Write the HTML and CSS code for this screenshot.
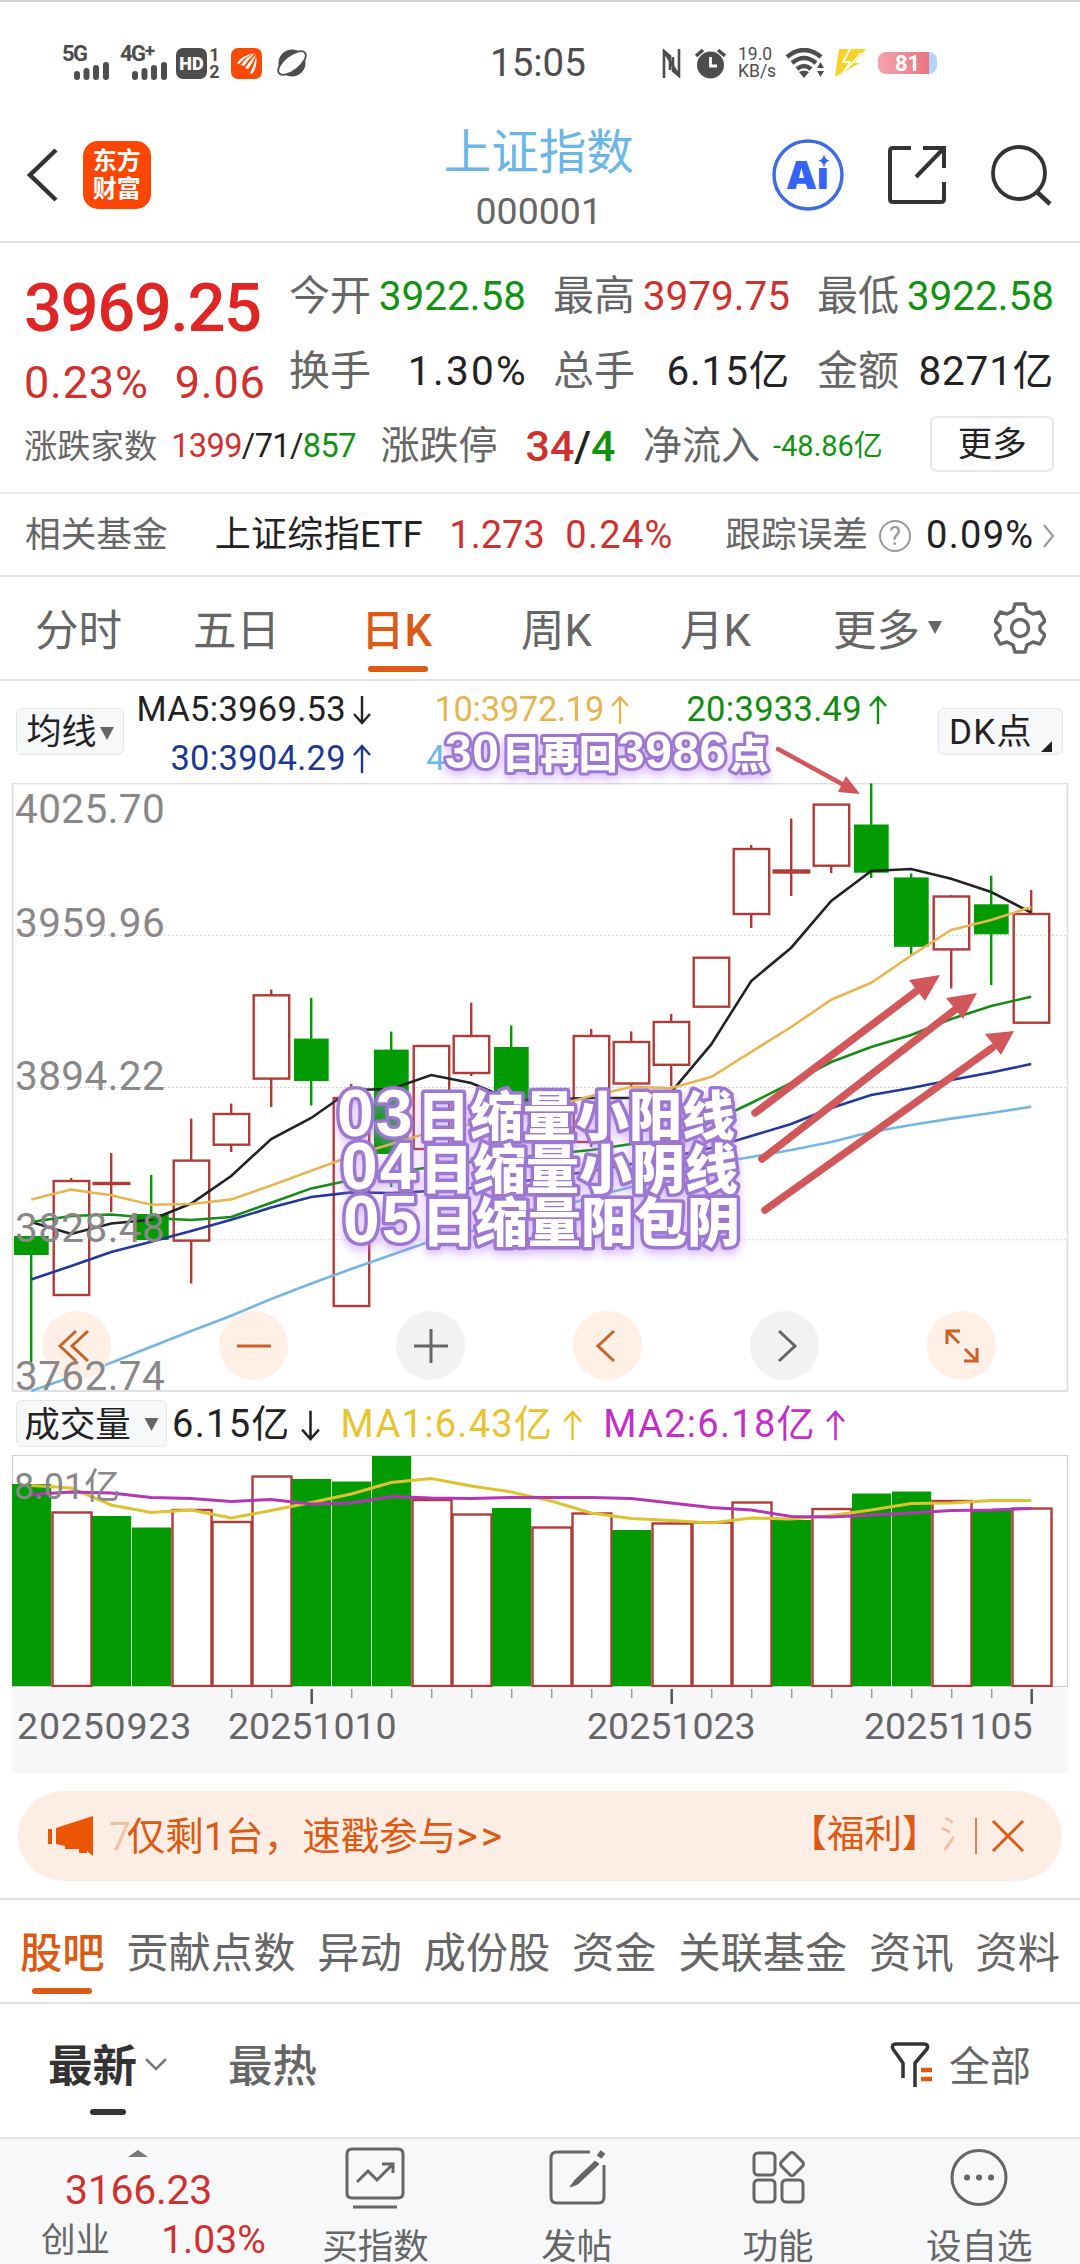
FILE: index.html
```html
<!DOCTYPE html>
<html lang="zh-CN">
<head>
    <meta charset="UTF-8">
    <meta name="viewport" content="width=device-width, initial-scale=1.0">
    <title>上证指数 000001</title>
    <link rel="stylesheet" href="styles.css">
</head>
<body>
    <svg class="defs" width="0" height="0">
        <symbol id="up" viewBox="0 0 20 30"><path d="M10 29V3M2 11L10 2L18 11" fill="none" stroke="currentColor" stroke-width="2.4"/></symbol>
        <symbol id="down" viewBox="0 0 20 30"><path d="M10 1V27M2 19L10 28L18 19" fill="none" stroke="currentColor" stroke-width="2.4"/></symbol>
        <symbol id="bars" viewBox="0 0 36 18"><path d="M3 12V15M12.500 9V15M22 6V15M32 3V15" fill="none" stroke="currentColor" stroke-width="6" stroke-linecap="round"/></symbol>
    </svg>

    <div class="status">
        <div class="signal"><b>5G</b><svg width="36" height="18"><use href="#bars"/></svg></div>
        <div class="signal second"><b>4G<sup>+</sup></b><svg width="36" height="18"><use href="#bars"/></svg></div>
        <div class="hd">HD</div>
        <div class="sims"><span>1</span><span>2</span></div>
        <svg class="app-dot" width="31" height="31" viewBox="0 0 31 31"><rect width="31" height="31" rx="7" fill="#fa4a06"/><path d="M6 15Q12 7 23 5Q14 9 8 16ZM10 17Q15 9 24 5Q17 12 13 18ZM14 20Q19 13 25 6Q22 15 17 21ZM19 25Q23 18 25 9Q27 18 21 26Z" fill="#fff"/></svg>
        <svg class="planet" width="30" height="30" viewBox="0 0 30 30"><circle cx="15" cy="15" r="13.500" fill="#4d4d4d"/><ellipse cx="15" cy="15" rx="16.500" ry="7.500" transform="rotate(-38 15 15)" fill="#fff" stroke="#4d4d4d" stroke-width="1.800"/></svg>
        <div class="clock">15:05</div>
        <svg class="nfc" width="19" height="31" viewBox="0 0 19 31"><path d="M2 30V3L8 8V22M17 1V28L11 23V9M2 3L17 28" fill="none" stroke="#4d4d4d" stroke-width="2.600"/></svg>
        <svg class="alarm" width="31" height="31" viewBox="0 0 31 31"><circle cx="15.500" cy="17" r="13.500" fill="#4d4d4d"/><path d="M1 8L8 2M30 8L23 2" stroke="#4d4d4d" stroke-width="3.500"/><path d="M15.500 9V18H22" fill="none" stroke="#fff" stroke-width="2.800"/></svg>
        <div class="speed"><span>19.0</span><span>KB/s</span></div>
        <svg class="wifi" width="39" height="30" viewBox="0 0 39 30"><path d="M1 9Q18 -5 35 9M6 15Q18 5 30 15M11 21Q18 15 25 21" fill="none" stroke="#4d4d4d" stroke-width="4.500"/><path d="M13 24Q18 21 23 24L18 30ZM31 20L34.500 14L38 20ZM31 23L34.500 29L38 23Z" fill="#4d4d4d"/></svg>
        <svg class="bolt" width="33" height="28" viewBox="0 0 33 28"><path d="M5 0H32L20 14H26L1 28Z" fill="#f7d32a"/><path d="M16 0L9 13H16L7 27M27 4L13 20" stroke="#fff" stroke-width="1.600" fill="none"/></svg>
        <div class="battery">81</div>
    </div>

    <header class="nav">
        <svg class="back" width="31" height="54" viewBox="0 0 31 54"><path d="M29 2L3 27L29 52" fill="none" stroke="#333" stroke-width="4.500"/></svg>
        <div class="logo">东方<br>财富</div>
        <div class="title">
            <h1>上证指数</h1>
            <p>000001</p>
        </div>
        <svg class="ai" width="72" height="72" viewBox="0 0 72 72"><circle cx="36" cy="36" r="34" fill="none" stroke="#426be0" stroke-width="3.500"/><text x="14" y="50" class="ai-text">Aı</text><path d="M52 15Q53 21 58 21.500Q53 22 52 29Q51 22 46 21.500Q51 21 52 15Z" fill="#3563f5"/></svg>
        <svg class="share" width="60" height="60" viewBox="0 0 60 60"><path d="M24 3H6Q3 3 3 6V54Q3 57 6 57H54Q57 57 57 54V37M36 3H57V23M57 3L29 32" fill="none" stroke="#333" stroke-width="4"/></svg>
        <svg class="search" width="62" height="62" viewBox="0 0 62 62"><circle cx="29" cy="29" r="26" fill="none" stroke="#333" stroke-width="3.800"/><path d="M47 48L60 60" stroke="#333" stroke-width="4.500"/></svg>
    </header>

    <section class="quote">
        <div class="price">
            <div class="last">3969.25</div>
            <div class="change"><span>0.23%</span><span>9.06</span></div>
        </div>
        <dl class="stats">
            <div><dt>今开</dt><dd class="green">3922.58</dd></div>
            <div><dt>最高</dt><dd class="red">3979.75</dd></div>
            <div><dt>最低</dt><dd class="green">3922.58</dd></div>
            <div><dt>换手</dt><dd class="rate">1.30%</dd></div>
            <div><dt>总手</dt><dd class="wide">6.15亿</dd></div>
            <div><dt>金额</dt><dd class="wide">8271亿</dd></div>
        </dl>
        <div class="breadth">
            <span class="lbl small">涨跌家数</span>
            <span class="updown"><i class="red">1399</i>/71/<i class="green">857</i></span>
            <span class="lbl">涨跌停</span>
            <span class="limit"><i class="red">34</i>/<i class="green">4</i></span>
            <span class="lbl">净流入</span>
            <span class="flow green">-48.86亿</span>
            <button class="more">更多</button>
        </div>
    </section>

    <section class="fund">
        <span class="gray">相关基金</span>
        <span class="etf">上证综指ETF</span>
        <span class="num red">1.273</span>
        <span class="num red pct">0.24%</span>
        <span class="gray err">跟踪误差</span>
        <span class="help">?</span>
        <span class="num error-rate">0.09%</span>
        <svg width="12" height="24" viewBox="0 0 12 24"><path d="M1 1L10 12L1 23" fill="none" stroke="#999" stroke-width="2"/></svg>
    </section>

    <nav class="periods">
        <a>分时</a>
        <a>五日</a>
        <a class="active">日K</a>
        <a>周K</a>
        <a>月K</a>
        <a>更多<svg width="14" height="13" viewBox="0 0 14 13"><path d="M0 0H14L7 13Z" fill="#666"/></svg></a>
        <svg class="gear" width="52" height="52" viewBox="0 0 52 52"><path d="M21 2H31L33 9L39 12L46 10L51 19L46 24V28L51 33L46 42L39 40L33 43L31 50H21L19 43L13 40L6 42L1 33L6 28V24L1 19L6 10L13 12L19 9Z" fill="none" stroke="#666" stroke-width="3.400" stroke-linejoin="round"/><circle cx="26" cy="26" r="8.500" fill="none" stroke="#666" stroke-width="3.400"/></svg>
    </nav>

    <section class="kline">
        <div class="ma-bar">
            <button class="pill">均线<svg width="14" height="13" viewBox="0 0 14 13"><path d="M0 0H14L7 13Z" fill="#666"/></svg></button>
            <div class="ma-list">
                <span class="ma5">MA5:3969.53<svg><use href="#down"/></svg></span>
                <span class="ma10">10:3972.19<svg><use href="#up"/></svg></span>
                <span class="ma20">20:3933.49<svg><use href="#up"/></svg></span>
                <span class="ma30">30:3904.29<svg><use href="#up"/></svg></span>
                <span class="ma60">4</span>
            </div>
            <button class="pill dk">DK点<svg width="11" height="11" viewBox="0 0 11 11"><path d="M11 0V11H0Z" fill="#222"/></svg></button>
        </div>
        <div class="price-chart">
            <svg id="candles" width="1080" height="609" viewBox="0 783 1080 609"></svg>
            <div class="tools">
                <button class="warm"><svg viewBox="0 0 34 34"><path d="M19 2L3 17L19 32M31 2L15 17L31 32"/></svg></button>
                <button class="warm"><svg viewBox="0 0 34 34"><path d="M0 17H34"/></svg></button>
                <button><svg viewBox="0 0 34 34"><path d="M0 17H34M17 0V34"/></svg></button>
                <button class="warm"><svg viewBox="0 0 34 34"><path d="M23 2L7 17L23 32"/></svg></button>
                <button><svg viewBox="0 0 34 34"><path d="M11 2L27 17L11 32"/></svg></button>
                <button class="warm"><svg viewBox="0 0 34 34"><path d="M2 15V2H15M2 2L14 14M32 19V32H19M32 32L20 20"/></svg></button>
            </div>
            <div class="scale">
                <span>4025.70</span>
                <span>3959.96</span>
                <span>3894.22</span>
                <span>3828.48</span>
                <span>3762.74</span>
            </div>
        </div>
        <svg class="marks" width="1080" height="711" viewBox="0 681 1080 711">
            <g stroke="#d2575b" stroke-width="7.500" stroke-linecap="round">
                <path d="M778 749L842 784" stroke-width="4.500"/>
                <path d="M755 1113L918 990"/>
                <path d="M762 1159L956 1009"/>
                <path d="M765 1210L992 1048"/>
            </g>
            <g fill="#d2575b">
                <path d="M860 794L838 792L846 776Z"/>
                <path d="M940 975L925 1001L909 980Z"/>
                <path d="M977 993L963 1019L946 998Z"/>
                <path d="M1014 1031L1001 1055L985 1034Z"/>
            </g>
            <g class="note small-note">
                <text y="768"><tspan class="digits" x="445">30</tspan><tspan x="502">日再回</tspan><tspan class="digits" x="618">3986</tspan><tspan x="730">点</tspan></text>
            </g>
            <g class="note">
                <text y="1136"><tspan class="digits" x="337">03</tspan><tspan x="417">日缩量小阳线</tspan></text>
                <text y="1189"><tspan class="digits" x="341">04</tspan><tspan x="420">日缩量小阴线</tspan></text>
                <text y="1242"><tspan class="digits" x="343">05</tspan><tspan x="422">日缩量阳包阴</tspan></text>
            </g>
        </svg>
    </section>

    <section class="volume">
        <div class="vol-bar">
            <button class="pill">成交量<svg width="15" height="13" viewBox="0 0 14 13"><path d="M0 0H14L7 13Z" fill="#666"/></svg></button>
            <span class="vol">6.15亿<svg><use href="#down"/></svg></span>
            <span class="v1">MA1:6.43亿<svg><use href="#up"/></svg></span>
            <span class="v2">MA2:6.18亿<svg><use href="#up"/></svg></span>
        </div>
        <div class="vol-chart">
            <svg id="bars-chart" width="1080" height="232" viewBox="0 1455 1080 232"></svg>
            <span class="vol-max">8.01亿</span>
        </div>
        <div class="axis">
            <svg id="ticks" width="1056" height="16" viewBox="12 1689 1056 16"></svg>
            <div class="dates"><span>20250923</span><span>20251010</span><span>20251023</span><span>20251105</span></div>
        </div>
    </section>

    <div class="banner">
        <svg width="46" height="40" viewBox="0 0 46 40"><path d="M0 13H4V28H0ZM8 12L45 0V40L39 35V37H31V33H17V30L8 28Z" fill="#ec5504"/></svg>
        <div class="marquee"><span><i class="fade-in">7</i>仅剩1台，速戳参与<i class="go">&gt;&gt;</i></span><span class="promo">【福利】<i class="fade-out">氵</i></span></div>
        <svg class="close" width="49" height="36" viewBox="0 0 49 36"><path d="M1 0V36" stroke="#dc5a14" stroke-width="1.500"/><path d="M18 3L48 33M48 3L18 33" stroke="#dc5a14" stroke-width="3"/></svg>
    </div>

    <nav class="tabs">
        <a class="active">股吧</a><a>贡献点数</a><a>异动</a><a>成份股</a><a>资金</a><a>关联基金</a><a>资讯</a><a>资料</a>
    </nav>

    <div class="feed">
        <a class="active">最新</a>
        <svg class="caret" width="22" height="13" viewBox="0 0 22 13"><path d="M1 1L11 11L21 1" fill="none" stroke="#777" stroke-width="2.500"/></svg>
        <a>最热</a>
        <svg class="filter" width="43" height="46" viewBox="0 0 43 46"><path d="M13 36V21L3 7Q1 2 6 2H34Q39 2 37 7L25 21V45" fill="none" stroke="#333" stroke-width="3.500"/><path d="M31 28H42M31 37H42" stroke="#dc5a14" stroke-width="4.500"/></svg>
        <span>全部</span>
    </div>

    <footer class="bottom">
        <div class="index">
            <svg width="20" height="7" viewBox="0 0 20 7"><path d="M0 7L10 0L20 7Z" fill="#777"/></svg>
            <div class="value">3166.23</div>
            <div class="row"><span>创业</span><span class="up">1.03%</span></div>
        </div>
        <div class="item">
            <svg viewBox="0 0 64 62"><path d="M9 2H55Q60 2 60 7V46Q60 51 55 51H9Q4 51 4 46V7Q4 2 9 2ZM10 60H54M14 35L25 24L34 33L50 17M39 17H50V26"/></svg>
            <span>买指数</span>
        </div>
        <div class="item">
            <svg viewBox="0 0 64 62"><path d="M45 5H12Q6 5 6 11V50Q6 56 12 56H53Q59 56 59 50V18"/><path d="M54 10L58 5" stroke-width="6"/><path d="M50 14L30 33L25 40L33 37L54 17Z" fill="#666" stroke-width="1"/></svg>
            <span>发帖</span>
        </div>
        <div class="item">
            <svg viewBox="0 0 64 62"><rect x="8" y="6" width="21" height="22" rx="4"/><rect x="8" y="33" width="21" height="22" rx="4"/><rect x="36" y="33" width="21" height="22" rx="4"/><rect x="37" y="8" width="18" height="18" rx="3" transform="rotate(45 46 17)"/></svg>
            <span>功能</span>
        </div>
        <div class="item">
            <svg viewBox="0 0 64 62"><circle cx="32" cy="30.500" r="27"/><path d="M20 30.500H20.100M32 30.500H32.100M44 30.500H44.100" stroke-width="6" stroke-linecap="round"/></svg>
            <span>设自选</span>
        </div>
    </footer>

    <script src="script.js"></script>
</body>
</html>
```

FILE: styles.css
```css
* {
    box-sizing: border-box;
}
body {
    width: 1080px;
    height: 2264px;
    margin: 0;
    overflow: hidden;
    background-color: #fff;
    color: #222;
    font-family: Roboto, "Noto Sans CJK SC", sans-serif;
    line-height: 1.2;
    white-space: nowrap;
}
h1, p, dl, dd {
    margin: 0;
}
i {
    font-style: normal;
}
button {
    font-family: inherit;
    color: inherit;
    padding: 0;
}
svg {
    display: block;
    flex: none;
}
.defs {
    position: absolute;
}
.red {
    color: #d0312f;
}
.green {
    color: #109410;
}

/* status bar */
.status {
    display: flex;
    align-items: center;
    height: 112px;
    padding: 12px 0 0 62px;
    border-top: 2px solid #d0d0d0;
    color: #4d4d4d;
}
.signal {
    width: 48px;
    height: 34px;
}
.signal b {
    display: block;
    font-size: 22px;
    line-height: 15px;
    letter-spacing: -1.5px;
}
.signal sup {
    font-size: 19px;
    line-height: 0;
    vertical-align: 4px;
}
.signal svg {
    margin: 1px 0 0 12px;
}
.second {
    margin-left: 10px;
}
.hd {
    width: 31px;
    height: 31px;
    margin-left: 8px;
    border-radius: 7px;
    background-color: #4d4d4d;
    color: #fff;
    font-size: 18px;
    font-weight: 900;
    line-height: 31px;
    text-align: center;
}
.sims {
    display: flex;
    flex-direction: column;
    width: 15px;
    font-size: 18px;
    font-weight: bold;
    line-height: 17px;
    text-align: center;
}
.app-dot {
    margin-left: 9px;
}
.planet {
    margin-left: 15px;
    overflow: visible;
}
.clock {
    margin-left: 183px;
    width: 98px;
    font-size: 38.5px;
}
.nfc {
    margin-left: 74px;
}
.alarm {
    margin-left: 14px;
}
.speed {
    display: flex;
    flex-direction: column;
    width: 36px;
    margin-left: 12px;
    font-size: 17.5px;
    line-height: 17px;
}
.wifi {
    margin-left: 12px;
}
.bolt {
    margin-left: 9px;
}
.battery {
    width: 59px;
    height: 22px;
    margin-left: 11px;
    border-radius: 8px;
    background: linear-gradient(90deg, #f3a3ae, #ea7582 86%, #b4d4f7 86%);
    color: #fff;
    font-size: 22px;
    font-weight: bold;
    line-height: 23px;
    text-align: center;
}

/* title bar */
.nav {
    display: flex;
    align-items: center;
    height: 131px;
    padding: 0 28px 4px 27px;
    border-bottom: 2px solid #e2e2e2;
}
.logo {
    width: 68px;
    height: 68px;
    margin-left: 25px;
    padding-top: 6px;
    border-radius: 15px;
    background-color: #fb4703;
    color: #fff;
    font-size: 24px;
    font-weight: bold;
    line-height: 28px;
    text-align: center;
}
.title {
    width: 200px;
    margin-left: 289px;
    padding-top: 11px;
    text-align: center;
}
.title h1 {
    color: #6ab6e6;
    font-size: 47.5px;
    font-weight: 400;
    line-height: 58px;
}
.title p {
    color: #666;
    font-size: 37.5px;
    line-height: 50px;
    padding-top: 4px;
}
.ai {
    margin-left: 134px;
}
.ai-text {
    fill: #3563f5;
    font-family: Inter, sans-serif;
    font-size: 39px;
    font-weight: 900;
}
.share {
    margin-left: 43px;
}
.search {
    margin-left: 43px;
}

/* quote */
.quote {
    display: grid;
    grid-template-columns: 265px 1fr;
    height: 251px;
    padding: 16px 26px 0 24px;
    border-bottom: 2px solid #ededed;
}
.last {
    height: 96px;
    color: #e02525;
    font-size: 67px;
    font-weight: 500;
    line-height: 98px;
    letter-spacing: -1.5px;
}
.change {
    display: flex;
    gap: 26px;
    color: #d0312f;
    font-size: 45px;
    line-height: 56px;
    letter-spacing: 0.8px;
}
.stats {
    display: grid;
    grid-template-columns: repeat(3, 237px);
    grid-auto-rows: 75px;
    column-gap: 27px;
}
.stats div {
    display: flex;
    justify-content: space-between;
    align-items: center;
}
.stats dt {
    color: #666;
    font-size: 41px;
}
.stats dd {
    font-size: 40.5px;
}
.stats .rate {
    letter-spacing: 2.3px;
    margin-right: -2px;
}
.stats .wide {
    letter-spacing: 0.8px;
}
.breadth {
    grid-column: 1 / 3;
    display: flex;
    align-items: center;
    height: 72px;
    margin-top: -10px;
}
.lbl {
    color: #666;
    font-size: 39px;
}
.small {
    font-size: 33.3px;
}
.updown {
    width: 210px;
    margin-left: 14px;
    font-size: 32.5px;
    letter-spacing: -0.6px;
}
.limit {
    width: 118px;
    margin-left: 28px;
    font-size: 43px;
    font-weight: 500;
}
.flow {
    width: 158px;
    margin-left: 13px;
    font-size: 29px;
}
.more {
    width: 124px;
    height: 56px;
    margin-top: -6px;
    border: 2px solid #e3e6e6;
    border-radius: 7px;
    background-color: #fff;
    font-size: 34.5px;
    line-height: 44px;
}

/* related fund */
.fund {
    display: flex;
    align-items: center;
    height: 83px;
    padding: 2px 25px 0;
    border-bottom: 2px solid #e2e2e2;
    font-size: 35.7px;
}
.gray {
    color: #666;
}
.etf {
    width: 211px;
    margin-left: 47px;
    font-size: 36px;
    letter-spacing: 0.3px;
}
.num {
    width: 92px;
    margin-left: 24px;
    font-size: 38px;
}
.fund .pct {
    width: 108px;
    letter-spacing: 1.3px;
}
.err {
    margin-left: 52px;
}
.help {
    width: 32px;
    height: 32px;
    margin-left: 11px;
    border: 2px solid #999;
    border-radius: 50%;
    color: #999;
    font-size: 25px;
    line-height: 29px;
    text-align: center;
}
.fund .error-rate {
    width: 108px;
    margin: 0 9px 0 15px;
    letter-spacing: 1.3px;
}

/* period tabs */
.periods {
    display: grid;
    grid-template-columns: 158px 161px 159px 159px 159px 163px 52px;
    align-items: center;
    height: 104px;
    padding-left: 35px;
    border-bottom: 2px solid #e2e2e2;
    color: #666;
    font-size: 43.5px;
}
.periods a {
    display: flex;
    align-items: center;
    height: 102px;
    padding-top: 8px;
}
.periods a:nth-child(3) {
    padding-left: 7px;
}
.periods a:nth-child(4), .periods a:nth-child(5) {
    padding-left: 8px;
}
.periods a:nth-child(6) {
    padding-left: 2px;
}
.periods a svg {
    margin-left: 8px;
    margin-bottom: 10px;
}
.periods .active {
    position: relative;
    color: #dc5a14;
    font-weight: 500;
}
.periods .active::after {
    content: "";
    position: absolute;
    left: 14px;
    bottom: 7px;
    width: 60px;
    height: 6px;
    border-radius: 3px;
    background-color: #dc5a14;
}

/* k-line */
.kline {
    position: relative;
}
.ma-bar {
    display: flex;
    height: 102px;
    padding-left: 16px;
}
.pill {
    display: flex;
    justify-content: center;
    align-items: center;
    width: 108px;
    height: 47px;
    margin-top: 27px;
    padding-top: 3px;
    border: 1px solid #e3e6e8;
    border-radius: 6px;
    background-color: #f7f8fa;
    font-size: 35px;
    line-height: 44px;
}
.pill svg {
    margin-left: 3px;
}
.ma-list {
    display: grid;
    grid-template-columns: 248px 258px 258px;
    grid-auto-rows: 49px;
    font-size: 34.5px;
}
.ma-list span {
    display: flex;
    justify-content: flex-end;
    align-items: center;
    padding-top: 8px;
}
.ma-list svg {
    width: 20px;
    height: 30px;
    margin-left: 6px;
}
.ma-list .ma5, .ma-list .ma20 {
    letter-spacing: 0.3px;
}
.ma-list .ma60 {
    justify-content: flex-start;
    padding-left: 54px;
}
.ma10 {
    color: #e6b552;
    letter-spacing: -0.3px;
}
.ma20 {
    color: #108c10;
}
.ma30 {
    color: #1f3794;
    letter-spacing: 0.3px;
}
.ma60 {
    color: #6fb9e6;
}
.pill.dk {
    width: 125px;
    margin-left: 50px;
    letter-spacing: 1.3px;
}
.dk svg {
    margin: 26px 0 0 8px;
}
.price-chart {
    position: relative;
    height: 608px;
}
.scale span {
    position: absolute;
    left: 15px;
    color: #888;
    font-size: 40.5px;
    line-height: 46px;
    letter-spacing: 0.4px;
}
.scale span:nth-child(1) { top: 3px; }
.scale span:nth-child(2) { top: 117px; }
.scale span:nth-child(3) { top: 270px; }
.scale span:nth-child(4) { top: 422px; }
.scale span:nth-child(5) { top: 570px; }
.tools {
    position: absolute;
    left: 42px;
    bottom: 11px;
    display: flex;
    gap: 108px;
}
.tools button {
    display: flex;
    justify-content: center;
    align-items: center;
    width: 69px;
    height: 69px;
    border: none;
    border-radius: 50%;
    background-color: #f2f2f2;
    color: #666;
}
.tools .warm {
    background-color: #feefe7;
    color: #c96227;
}
.tools svg {
    width: 34px;
    height: 34px;
    fill: none;
    stroke: currentColor;
    stroke-width: 3;
}
.tools button:first-child {
    padding-right: 6px;
}
/* arrows and outlined captions over the chart */
.marks {
    position: absolute;
    left: 0;
    top: 0;
}
.note {
    fill: #fff;
    stroke: #9c78d2;
    stroke-width: 7px;
    stroke-linejoin: round;
    paint-order: stroke;
    font-family: "Noto Sans CJK SC", sans-serif;
    font-size: 53px;
    font-weight: 900;
    filter: drop-shadow(0 5px 5px rgba(184, 130, 255, 0.5));
}
.note .digits {
    font-family: "Liberation Sans", Arial, sans-serif;
    font-size: 66px;
    font-weight: bold;
    letter-spacing: 2px;
}
.small-note {
    font-size: 38.5px;
    stroke-width: 6px;
}
.small-note .digits {
    font-size: 48px;
    letter-spacing: 0.5px;
}

/* volume */
.vol-bar {
    display: flex;
    align-items: center;
    height: 64px;
    padding-left: 16px;
    font-size: 38px;
    letter-spacing: 1.3px;
}
.vol-bar .pill {
    width: 151px;
    margin-top: 0;
    font-size: 35.5px;
}
.vol-bar .pill svg {
    margin-left: 13px;
}
.vol-bar span {
    display: flex;
    align-items: center;
    margin-left: 5px;
    padding-top: 4px;
}
.vol-bar span svg {
    width: 21px;
    height: 33px;
    margin-left: 9px;
}
.vol-bar .v1 {
    margin-left: 20px;
    color: #e8c52e;
}
.vol-bar .v2 {
    margin-left: 20px;
    color: #c42fc9;
}
.vol-chart {
    position: relative;
    height: 232px;
}
.vol-max {
    position: absolute;
    left: 14px;
    top: 8px;
    color: #888;
    font-size: 36px;
    line-height: 48px;
}
.axis {
    height: 86px;
    margin: 0 12px;
    padding-top: 2px;
    background-color: #f7f7fa;
}
.dates {
    display: grid;
    grid-template-columns: 211px 359px 277px 1fr;
    padding-left: 5px;
    color: #666;
    font-size: 37.5px;
    line-height: 43px;
}
.dates span:first-child {
    letter-spacing: 0.8px;
}

/* marquee banner */
.banner {
    display: flex;
    align-items: center;
    height: 90px;
    margin: 18px 18px 17px;
    padding-left: 30px;
    border-radius: 45px;
    background-color: #fceee5;
    color: #dc5a14;
    font-size: 38.5px;
}
.marquee {
    display: flex;
    justify-content: space-between;
    width: 842px;
    margin-left: 15px;
    padding-top: 2px;
}
.promo {
    margin-right: -26px;
    font-size: 37.5px;
}
.fade-in {
    opacity: 0.3;
    margin-right: -4px;
}
.fade-out {
    opacity: 0.3;
}
.go {
    font-size: 41px;
    letter-spacing: 3px;
}
.close {
    margin-left: 24px;
}

/* content tabs */
.tabs {
    display: flex;
    justify-content: space-between;
    height: 106px;
    padding: 0 20px 0 20px;
    border-top: 2px solid #e2e2e2;
    border-bottom: 2px solid #e2e2e2;
    color: #666;
    font-size: 42.3px;
    line-height: 107px;
}
.tabs .active {
    position: relative;
    color: #dc5a14;
    font-weight: 500;
}
.tabs .active::after {
    content: "";
    position: absolute;
    left: 12px;
    bottom: 8px;
    width: 60px;
    height: 6px;
    border-radius: 3px;
    background-color: #dc5a14;
}

.feed {
    display: flex;
    align-items: center;
    height: 135px;
    padding: 0 49px 6px 48px;
    border-bottom: 2px solid #e2e2e2;
    color: #666;
    font-size: 44.5px;
    font-weight: 500;
}
.feed .active {
    position: relative;
    color: #333;
    font-weight: bold;
}
.feed .active::after {
    content: "";
    position: absolute;
    left: 42px;
    bottom: -21px;
    width: 36px;
    height: 6px;
    border-radius: 3px;
    background-color: #333;
}
.caret {
    margin: -6px 61px 0 8px;
}
.filter {
    margin: -5px 16px 0 auto;
}
.feed span {
    font-size: 41px;
    font-weight: 400;
}

/* bottom toolbar */
.bottom {
    display: flex;
    height: 126px;
    background-color: #f7f8fa;
    color: #666;
    font-size: 35.5px;
}
.index {
    width: 275px;
    padding-top: 11px;
}
.index svg {
    margin-left: 128px;
}
.value {
    margin: 7px 0 0 65px;
    color: #d0312f;
    font-size: 41px;
    line-height: 52px;
    letter-spacing: -0.3px;
}
.row {
    display: flex;
    justify-content: space-between;
    padding: 0 9px 0 41px;
    font-size: 34.5px;
    line-height: 48px;
}
.up {
    color: #d0312f;
    font-size: 39px;
}
.item {
    display: flex;
    flex-direction: column;
    align-items: center;
    width: 201.500px;
    padding-top: 8px;
}
.item svg {
    width: 64px;
    height: 62px;
    fill: none;
    stroke: #666;
    stroke-width: 3;
}
.item span {
    padding-top: 14px;
    line-height: 48px;
}
```

FILE: script.js
```js
const RED = '#b23a37';
const GREEN = '#029c02';
const STEP = 40;
const FIRST = 31.2;

const cx = i => FIRST + i * STEP;

// [color, body top, body bottom, high, low]
const candles = [
    ['g', 1236, 1255, 1236, 1362], ['r', 1181, 1295, 1178, 1295], ['r', 1183, 1184, 1153, 1212],
    ['g', 1214, 1240, 1175, 1240], ['r', 1160.6, 1240.6, 1118.6, 1283.5], ['r', 1114, 1144.7, 1103.5, 1152],
    ['r', 995.3, 1078.6, 989.6, 1107], ['g', 1038.6, 1081, 998, 1105.5], ['r', 1098, 1306, 1084, 1306],
    ['g', 1049.6, 1154, 1031.6, 1187], ['r', 1046, 1149, 1046, 1149], ['r', 1036, 1073, 1002.7, 1076],
    ['g', 1047, 1106, 1025.5, 1106], ['g', 1106, 1150, 1100, 1172], ['r', 1036, 1142, 1029, 1147],
    ['r', 1042, 1083.5, 1031.4, 1086], ['r', 1022, 1064.8, 1014, 1086], ['r', 957.7, 1006.7, 957.7, 1006.7],
    ['r', 849, 914, 845, 928], ['r', 870.5, 872.5, 818.5, 896], ['r', 804.6, 865.7, 804.6, 873],
    ['g', 824.5, 872.7, 783.3, 878], ['g', 877.4, 946.8, 873.5, 954.6], ['r', 896.5, 949.4, 895, 988.5],
    ['g', 904.3, 934.3, 875.7, 985], ['r', 914, 1022.7, 890, 1022.7]
];

const averages = {
    '#222222': [1222, 1234, 1223.5, 1219.8, 1203.5, 1176, 1139, 1118, 1090, 1089, 1075, 1083, 1100, 1099, 1098, 1098, 1092, 1044.4, 981, 947.7, 901, 871, 869, 878.7, 892, 912.6],
    '#e8b552': [1199.4, 1189.6, 1195.3, 1204.7, 1204, 1199.4, 1185.5, 1170.8, 1156, 1144, 1132, 1124, 1116, 1107, 1096, 1087, 1088, 1077, 1051.8, 1027, 999.7, 982.8, 955.5, 930, 920, 907],
    '#168c16': [1222, 1216, 1214.5, 1218, 1220, 1217, 1202.7, 1188.4, 1180, 1173, 1167, 1162, 1158, 1154, 1150, 1144, 1140, 1122, 1103, 1083, 1062, 1047, 1035, 1019, 1006, 996.7],
    '#22389a': [1279.4, 1266, 1252, 1241.8, 1231, 1219.8, 1207.6, 1197, 1192.4, 1193, 1191, 1188, 1183, 1177, 1171, 1164, 1157, 1148, 1136, 1124, 1108, 1095, 1088, 1080, 1072.6, 1064],
    '#75b6e2': [1391, 1377, 1362.7, 1346.7, 1331, 1315.7, 1299, 1283.5, 1269, 1255, 1241, 1231, 1221, 1210, 1197, 1187, 1173, 1163.7, 1157, 1150, 1142, 1132, 1125, 1118.6, 1113, 1106.8]
};

// [color, bar top]
const volumes = [
    ['g', 1484], ['r', 1512.5], ['g', 1516], ['g', 1527.5], ['r', 1510], ['r', 1522], ['r', 1476.5],
    ['g', 1479], ['g', 1481.5], ['g', 1456], ['r', 1500], ['r', 1514.5], ['g', 1508], ['r', 1527.5],
    ['r', 1513.5], ['g', 1530], ['r', 1523.5], ['r', 1522.5], ['r', 1502.5], ['g', 1520], ['r', 1509],
    ['g', 1493.5], ['g', 1491.5], ['r', 1501], ['g', 1510], ['r', 1508.5]
];

const volumeAverages = {
    '#dfc22f': [1485.5, 1488, 1505, 1512.5, 1510, 1518, 1510.5, 1502.5, 1494, 1482.5, 1478.5, 1486, 1492, 1501, 1513, 1518.5, 1520.5, 1523, 1518, 1519, 1515.5, 1510, 1503.5, 1503, 1500.5, 1500.5],
    '#b436b4': [1494.5, 1492, 1493, 1497.5, 1498.5, 1501.5, 1499.5, 1504, 1503, 1496.5, 1498, 1498.5, 1497.5, 1497.5, 1497.5, 1498.5, 1503, 1507.5, 1510, 1516.5, 1517, 1515, 1513, 1510.5, 1510, 1508.5]
};

function line(x1, y1, x2, y2, stroke, width, extra = '') {
    return `<line x1="${x1}" y1="${y1}" x2="${x2}" y2="${y2}" stroke="${stroke}" stroke-width="${width}" ${extra}/>`;
}

function rect(x, y, w, h, fill, stroke, width) {
    return `<rect x="${x}" y="${y}" width="${w}" height="${h}" fill="${fill}" stroke="${stroke}" stroke-width="${width}"/>`;
}

function curves(set, width) {
    return Object.entries(set).map(([color, ys]) =>
        `<polyline points="${ys.map((y, i) => cx(i) + ',' + y).join(' ')}" fill="none" stroke="${color}" stroke-width="${width}"/>`
    ).join('');
}

function drawCandles() {
    let out = rect(12.5, 783.5, 1055, 607.5, 'none', '#dedede', 1.8);
    [935.3, 1087.5, 1239.8].forEach(y => {
        out += line(12, y, 1068, y, '#d5d5d5', 1, 'stroke-dasharray="2 2"');
    });
    candles.forEach(([c, top, bottom, high, low], i) => {
        const x = cx(i);
        if (c === 'g') {
            out += line(x, high, x, low, GREEN, 2.4);
            out += rect(x - 17.3, top, 34.8, bottom - top, GREEN, 'none', 0);
        } else {
            out += line(x, high, x, top, RED, 2.4) + line(x, bottom, x, low, RED, 2.4);
            out += rect(x - 17.5, top, 35.5, bottom - top, 'none', RED, 2.4);
        }
    });
    document.getElementById('candles').innerHTML = out + curves(averages, 2.6);
}

function drawVolumes() {
    let out = rect(12.5, 1455.5, 1055, 231, 'none', '#d0d0d0', 1.2);
    volumes.forEach(([c, top], i) => {
        const x = 12 + i * STEP;
        out += c === 'g'
            ? rect(x, top, 39.2, 1686 - top, GREEN, 'none', 0)
            : rect(x + 0.5, top, 39, 1686 - top, '#fff', RED, 2.4);
    });
    document.getElementById('bars-chart').innerHTML = out + curves(volumeAverages, 3);
}

function drawTicks() {
    let out = '';
    for (let i = 5; i < 26; i++) {
        const long = [7, 16, 25].includes(i);
        out += line(cx(i) + 0.5, 1689, cx(i) + 0.5, long ? 1704 : 1698, long ? '#555' : '#999', long ? 2.5 : 1.5);
    }
    document.getElementById('ticks').innerHTML = out;
}

drawCandles();
drawVolumes();
drawTicks();
```
